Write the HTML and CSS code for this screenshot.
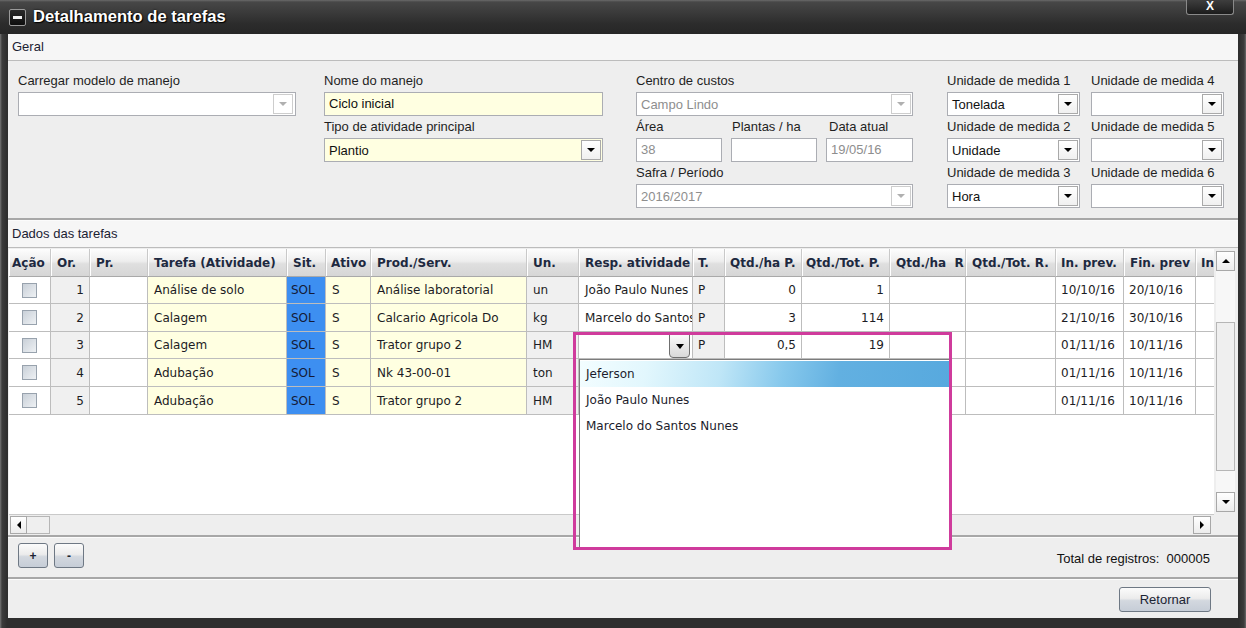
FILE: index.html
```html
<!DOCTYPE html>
<html lang="pt">
<head>
<meta charset="utf-8">
<title>Detalhamento de tarefas</title>
<link rel="stylesheet" href="styles.css">
</head>
<body>
<div class="window">
  <div class="titlebar">
    <div class="ticon"><span></span></div>
    <div class="ttext">Detalhamento de tarefas</div>
    <div class="tclose">X</div>
  </div>
  <div class="client">
    <div class="sec-head">Geral</div>
    <div class="form">
      <div class="col c1">
        <div class="field"><div class="lbl">Carregar modelo de manejo</div>
          <div class="combo dis"><span class="val"></span><span class="ab"><i></i></span></div></div>
      </div>
      <div class="col c2">
        <div class="field"><div class="lbl">Nome do manejo</div>
          <div class="inp yellow">Ciclo inicial</div></div>
        <div class="field"><div class="lbl">Tipo de atividade principal</div>
          <div class="combo yellow"><span class="val">Plantio</span><span class="ab"><i></i></span></div></div>
      </div>
      <div class="col c3">
        <div class="field"><div class="lbl">Centro de custos</div>
          <div class="combo dis"><span class="val">Campo Lindo</span><span class="ab"><i></i></span></div></div>
        <div class="trio">
          <div class="field f86"><div class="lbl">Área</div><div class="inp dis">38</div></div>
          <div class="field f86"><div class="lbl lp1">Plantas / ha</div><div class="inp"></div></div>
          <div class="field f87"><div class="lbl lp3">Data atual</div><div class="inp dis">19/05/16</div></div>
        </div>
        <div class="field"><div class="lbl">Safra / Período</div>
          <div class="combo dis"><span class="val">2016/2017</span><span class="ab"><i></i></span></div></div>
      </div>
      <div class="col c45">
        <div class="field"><div class="lbl">Unidade de medida 1</div>
          <div class="combo"><span class="val">Tonelada</span><span class="ab"><i></i></span></div></div>
        <div class="field"><div class="lbl">Unidade de medida 4</div>
          <div class="combo"><span class="val"></span><span class="ab"><i></i></span></div></div>
        <div class="field"><div class="lbl">Unidade de medida 2</div>
          <div class="combo"><span class="val">Unidade</span><span class="ab"><i></i></span></div></div>
        <div class="field"><div class="lbl">Unidade de medida 5</div>
          <div class="combo"><span class="val"></span><span class="ab"><i></i></span></div></div>
        <div class="field"><div class="lbl">Unidade de medida 3</div>
          <div class="combo"><span class="val">Hora</span><span class="ab"><i></i></span></div></div>
        <div class="field"><div class="lbl">Unidade de medida 6</div>
          <div class="combo"><span class="val"></span><span class="ab"><i></i></span></div></div>
      </div>
    </div>
    <div class="sep"></div>
    <div class="sec-head">Dados das tarefas</div>
    <div class="grid-area">
      <div class="viewport">
        <div class="row head">
          <div class="c ha">Ação</div><div class="c">Or.</div><div class="c">Pr.</div><div class="c">Tarefa (Atividade)</div>
          <div class="c">Sit.</div><div class="c hs">Ativo</div><div class="c">Prod./Serv.</div><div class="c">Un.</div>
          <div class="c">Resp. atividade</div><div class="c hs">T.</div><div class="c hs">Qtd./ha P.</div><div class="c hs2">Qtd./Tot. P.</div>
          <div class="c">Qtd./ha&nbsp; R.</div><div class="c">Qtd./Tot. R.</div><div class="c hs">In. prev.</div><div class="c">Fin. prev</div><div class="c hs">In. real</div>
        </div>
        <div class="row r27">
          <div class="c ck"><span class="cb"></span></div><div class="c num gray">1</div><div class="c"></div><div class="c yel">Análise de solo</div>
          <div class="c sit">SOL</div><div class="c yel">S</div><div class="c yel">Análise laboratorial</div><div class="c gray">un</div>
          <div class="c">João Paulo Nunes</div><div class="c gray tp">P</div><div class="c num">0</div><div class="c num">1</div>
          <div class="c"></div><div class="c"></div><div class="c dt">10/10/16</div><div class="c dt">20/10/16</div><div class="c"></div>
        </div>
        <div class="row r28">
          <div class="c ck"><span class="cb"></span></div><div class="c num gray">2</div><div class="c"></div><div class="c yel">Calagem</div>
          <div class="c sit">SOL</div><div class="c yel">S</div><div class="c yel">Calcario Agricola Do</div><div class="c gray">kg</div>
          <div class="c">Marcelo do Santos Nunes</div><div class="c gray tp">P</div><div class="c num">3</div><div class="c num">114</div>
          <div class="c"></div><div class="c"></div><div class="c dt">21/10/16</div><div class="c dt">30/10/16</div><div class="c"></div>
        </div>
        <div class="row r27">
          <div class="c ck"><span class="cb"></span></div><div class="c num gray">3</div><div class="c"></div><div class="c yel">Calagem</div>
          <div class="c sit">SOL</div><div class="c yel">S</div><div class="c yel">Trator grupo 2</div><div class="c gray">HM</div>
          <div class="c edit"><span class="eb"><i></i></span></div><div class="c gray tp">P</div><div class="c num">0,5</div><div class="c num">19</div>
          <div class="c"></div><div class="c"></div><div class="c dt">01/11/16</div><div class="c dt">10/11/16</div><div class="c"></div>
        </div>
        <div class="row r28">
          <div class="c ck"><span class="cb"></span></div><div class="c num gray">4</div><div class="c"></div><div class="c yel">Adubação</div>
          <div class="c sit">SOL</div><div class="c yel">S</div><div class="c yel">Nk 43-00-01</div><div class="c gray">ton</div>
          <div class="c"></div><div class="c gray"></div><div class="c"></div><div class="c"></div>
          <div class="c"></div><div class="c"></div><div class="c dt">01/11/16</div><div class="c dt">10/11/16</div><div class="c"></div>
        </div>
        <div class="row r28">
          <div class="c ck"><span class="cb"></span></div><div class="c num gray">5</div><div class="c"></div><div class="c yel">Adubação</div>
          <div class="c sit">SOL</div><div class="c yel">S</div><div class="c yel">Trator grupo 2</div><div class="c gray">HM</div>
          <div class="c"></div><div class="c gray"></div><div class="c"></div><div class="c"></div>
          <div class="c"></div><div class="c"></div><div class="c dt">01/11/16</div><div class="c dt">10/11/16</div><div class="c"></div>
        </div>
      </div>
      <div class="vscroll">
        <div class="sb up"><i></i></div>
        <div class="vtrack"><div class="vthumb"></div></div>
        <div class="sb down"><i></i></div>
      </div>
      <div class="hscroll">
        <div class="sb left"><i></i></div>
        <div class="hthumb"></div>
        <div class="sb right"><i></i></div>
      </div>
      <div class="corner"></div>
    </div>
    <div class="sep"></div>
    <div class="toolbar">
      <div class="btn small">+</div>
      <div class="btn small">-</div>
      <div class="total">Total de registros:&nbsp; 000005</div>
    </div>
    <div class="sep"></div>
    <div class="footer">
      <div class="btn ret">Retornar</div>
    </div>
  </div>

  <div class="dropdown">
    <div class="item sel">Jeferson</div>
    <div class="item">João Paulo Nunes</div>
    <div class="item">Marcelo do Santos Nunes</div>
  </div>
  <div class="mark"></div>
</div>
</body>
</html>
```

FILE: styles.css
```css
* { box-sizing: border-box; }
html, body { margin: 0; padding: 0; }
body {
  width: 1246px; height: 628px; overflow: hidden;
  background: #2b2b2b;
  font-family: "Liberation Sans", Arial, sans-serif;
  font-size: 13px; color: #1e1e1e;
}
.window {
  position: relative;
  width: 1246px; height: 628px;
  display: flex; flex-direction: column;
  background: linear-gradient(90deg, #777 0, #3c3c3c 2px, #2e2e2e 7px, #2e2e2e 1239px, #3c3c3c 1244px, #6a6a6a 1246px);
}
/* title bar */
.titlebar {
  height: 34px; flex: none;
  display: flex; align-items: center;
  padding-left: 9px;
  background: linear-gradient(#6a6a6a 0, #474747 2px, #393939 40%, #2c2c2c 70%, #262626 100%);
}
.ticon {
  width: 17px; height: 17px; margin-right: 7px;
  border: 1px solid #9a9a9a; border-radius: 2px;
  background: linear-gradient(#2a2a2a, #0e0e0e);
  display: flex; align-items: center; justify-content: center;
}
.ticon span { width: 9px; height: 3px; background: #f2f2f2; }
.ttext {
  color: #fff; font-weight: bold; font-size: 16.6px;
  text-shadow: 0 0 2px #000, 1px 1px 1px #000;
}
.tclose {
  margin-left: auto; margin-right: 12px; align-self: flex-start;
  width: 48px; height: 15px;
  border: 1px solid #8a8a8a; border-top: none;
  border-radius: 0 0 3px 3px;
  background: linear-gradient(#3e3e3e, #1c1c1c);
  color: #fff; font-weight: bold; font-size: 12px; line-height: 13px;
  text-align: center;
}
/* client area */
.client {
  flex: 1; margin: 0 8px 10px 8px;
  background: #eeeeee;
  display: flex; flex-direction: column;
}
.sec-head {
  height: 27px; flex: none;
  background: #f6f6f6;
  border-bottom: 1px solid #bcbcbc;
  padding-left: 4px; line-height: 26px;
  color: #1b2233;
}
.sep {
  height: 3px; flex: none;
  background: #a7a7a7;
  border-bottom: 1px solid #fbfbfb;
}
/* form */
.form {
  height: 157px; flex: none;
  display: flex; align-items: flex-start;
  padding: 12px 0 0 10px;
}
.col { display: flex; flex-direction: column; }
.c1 { width: 278px; margin-right: 28px; }
.c2 { width: 279px; margin-right: 33px; }
.c3 { width: 277px; margin-right: 34px; }
.c45 { display: grid; grid-template-columns: 133px 133px; column-gap: 11px; }
.field { display: flex; flex-direction: column; margin-bottom: 3px; }
.lbl { height: 16px; line-height: 16px; margin-bottom: 3px; white-space: nowrap; color: #1f1f1f; }
.lp1 { padding-left: 1px; }
.lp3 { padding-left: 3px; }
.trio { display: flex; gap: 9px; }
.f86 { width: 86px; }
.f87 { width: 87px; }
.inp {
  height: 24px; border: 1px solid #abadb3; background: #fff;
  padding-left: 4px; line-height: 22px; white-space: nowrap; color: #111;
}
.combo {
  height: 24px; border: 1px solid #abadb3; background: #fff;
  display: flex; align-items: center;
}
.combo .val { flex: 1; padding-left: 4px; white-space: nowrap; overflow: hidden; color: #111; }
.ab {
  width: 20px; height: 20px; margin-right: 1px;
  border: 1px solid #a9a9a9;
  background: linear-gradient(#ffffff, #f0f0f0);
  display: flex; align-items: center; justify-content: center;
}
.ab i {
  width: 0; height: 0;
  border-left: 4px solid transparent; border-right: 4px solid transparent;
  border-top: 4px solid #000;
}
.yellow { background: #ffffe1; }
.dis .val, .inp.dis { color: #8e8e8e; }
.dis .ab { border-color: #cdcdcd; background: #fff; }
.dis .ab i { border-top-color: #b0b0b0; }
.c1 .ab { margin-right: 2px; }
/* grid */
.grid-area {
  height: 287px; flex: none;
  display: grid;
  grid-template-columns: 1205px 22px;
  grid-template-rows: 265px 21px;
  padding: 1px 0 0 1px;
  font-family: "DejaVu Sans", Verdana, sans-serif;
  font-size: 12px;
}
.viewport { background: #fff; overflow: hidden; }
.row {
  display: grid;
  grid-template-columns: 42px 39px 58px 139px 39px 45px 156px 52px 114px 32px 77px 88px 76px 90px 68px 72px 60px;
  width: 1247px;
}
.row .c {
  border-right: 1px solid #bdbdbd; border-bottom: 1px solid #bdbdbd;
  padding-left: 6px;
  display: flex; align-items: center;
  white-space: nowrap; overflow: hidden;
  color: #1c1c24;
}
.head { height: 28px; }
.head .c {
  background: linear-gradient(#fdfdfd 0, #eeeeee 45%, #dfdfdf 55%, #d6d6d6 100%);
  border-right: 1px solid #c9c9c9;
  border-bottom: 1px solid #a9a9a9;
  box-shadow: inset 1px 0 0 #fff;
  font-weight: bold; color: #1d2940;
  padding-left: 6px;
}
.head .ha { padding-left: 3px; }
.head .hs { padding-left: 5px; }
.head .hs2 { padding-left: 4px; }
.r27 { height: 27px; }
.r28 { height: 28px; }
.row .ck { justify-content: center; padding-left: 0; }
.cb {
  width: 15px; height: 15px;
  border: 1px solid #98a2ad;
  background: linear-gradient(135deg, #c9d0d8, #eef1f4);
}
.row .num { justify-content: flex-end; padding-left: 0; padding-right: 5px; }
.gray { background: #f0f0f0; }
.yel { background: #ffffe1; }
.row .sit { background: #3d8ff1; padding-left: 4px; color: #141a36; }
.row .tp { padding-left: 5px; }
.row .dt { padding-left: 5px; }
.row .edit { justify-content: flex-end; align-items: flex-start; padding: 2px 2px 0 0; }
.eb {
  width: 21px; height: 24px;
  border: 1px solid #6f6f6f; border-radius: 0 0 4px 4px;
  background: linear-gradient(#fafafa, #d9d9d9);
  display: flex; align-items: center; justify-content: center;
}
.eb i {
  width: 0; height: 0;
  border-left: 4px solid transparent; border-right: 4px solid transparent;
  border-top: 5px solid #000;
}
/* scrollbars */
.vscroll {
  background: #eeeeee;
  display: flex; flex-direction: column;
  padding: 2px 1px 2px 2px;
}
.sb {
  width: 19px; height: 20px; flex: none;
  border: 1px solid #a8a8a8;
  background: linear-gradient(#ffffff, #ececec);
  display: flex; align-items: center; justify-content: center;
}
.sb i { width: 0; height: 0; }
.up i { border-left: 4px solid transparent; border-right: 4px solid transparent; border-bottom: 4px solid #000; }
.down i { border-left: 4px solid transparent; border-right: 4px solid transparent; border-top: 4px solid #000; }
.left i { border-top: 4px solid transparent; border-bottom: 4px solid transparent; border-right: 4px solid #000; }
.right i { border-top: 4px solid transparent; border-bottom: 4px solid transparent; border-left: 4px solid #000; }
.vtrack { flex: 1; background: #f7f7f7; padding-top: 51px; padding-bottom: 21px; display: flex; }
.vthumb { flex: 1; width: 19px; border: 1px solid #b6b6b6; background: #efefef; }
.hscroll {
  background: #eeeeee;
  border-top: 1px solid #c9c9c9;
  display: flex; align-items: flex-start;
  padding: 1px 3px 0 1px;
}
.hscroll .sb { width: 17px; height: 18px; }
.hthumb { width: 23px; height: 18px; border: 1px solid #b6b6b6; border-left: none; background: #efefef; }
.hscroll .right { margin-left: auto; width: 18px; }
.corner { background: #eeeeee; }
/* bottom bars */
.toolbar {
  height: 39px; flex: none;
  display: flex; align-items: flex-start;
  padding: 5px 28px 0 10px; gap: 6px;
}
.btn {
  border: 1px solid #6e7884; border-radius: 3px;
  background: linear-gradient(#fbfbfb 0, #ececec 45%, #d3d8df 55%, #c6cdd7 100%);
  display: flex; align-items: center; justify-content: center;
  color: #1c2433;
}
.small { width: 30px; height: 25px; font-weight: bold; font-size: 12px; }
.total { margin-left: auto; align-self: center; margin-top: -4px; color: #111; }
.footer {
  height: 38px; flex: none;
  display: flex; justify-content: flex-end;
  padding: 7px 27px 0 0;
}
.ret { width: 92px; height: 25px; font-size: 13px; }
/* overlays */
.dropdown {
  position: absolute; left: 579px; top: 359px;
  width: 371px; height: 190px;
  background: #fff;
  border: 1px solid #7c7c7c;
  padding-top: 1px;
  font-family: "DejaVu Sans", Verdana, sans-serif; font-size: 12px;
  color: #1c1c2c;
}
.item { height: 26px; line-height: 26px; padding-left: 6px; white-space: nowrap; }
.item.sel {
  background: linear-gradient(100deg, #f3fdff 0%, #e2f7fd 18%, #bfe6f7 38%, #86c8ec 55%, #62b0e1 70%, #57a9de 100%);
}
.mark {
  position: absolute; left: 573px; top: 332px;
  width: 379px; height: 218px;
  border: 3px solid #cf3b9c;
}
```
